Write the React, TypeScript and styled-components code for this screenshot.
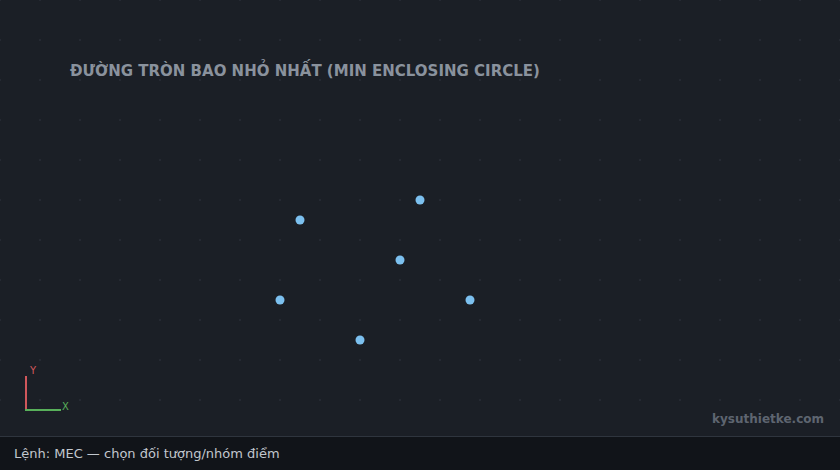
import React from 'react';
import styled, { createGlobalStyle } from 'styled-components';

const GlobalStyle = createGlobalStyle`
  html, body {
    margin: 0;
    padding: 0;
    background: #1b1f26;
  }
  * {
    box-sizing: border-box;
  }
`;

const Screen = styled.div`
  width: 840px;
  height: 470px;
  display: flex;
  flex-direction: column;
  font-family: 'DejaVu Sans', 'Noto Sans', sans-serif;
  overflow: hidden;
`;

const Canvas = styled.div`
  position: relative;
  flex: 1;
  display: flex;
  flex-direction: column;
  justify-content: space-between;
  padding: 62px 16px 10px 70px;
  background: #1b1f26;
`;

const Drawing = styled.svg`
  position: absolute;
  inset: 0;
  width: 100%;
  height: 100%;
`;

const Title = styled.h1`
  position: relative;
  margin: 0;
  font-size: 15px;
  font-weight: 700;
  color: #8a929d;
`;

const Watermark = styled.div`
  position: relative;
  align-self: flex-end;
  font-size: 12px;
  font-weight: 700;
  color: #5e6570;
`;

const CommandBar = styled.div`
  height: 34px;
  display: flex;
  align-items: center;
  padding: 0 14px;
  background: #111419;
  border-top: 1px solid #2f353e;
  font-size: 13px;
  color: #c2c7ce;
`;

type Pt = { x: number; y: number };

// sample point set on the drawing plane
const points: Pt[] = [
  { x: 300, y: 220 },
  { x: 420, y: 200 },
  { x: 400, y: 260 },
  { x: 280, y: 300 },
  { x: 470, y: 300 },
  { x: 360, y: 340 },
];

const Axes: React.FC = () => (
  <g>
    <line x1={26} y1={376} x2={26} y2={410.5} stroke="#d0575b" strokeWidth={2} />
    <line x1={25} y1={410} x2={61} y2={410} stroke="#58b05a" strokeWidth={2} />
    <text x={30} y={374} fontSize={10} fill="#d0575b" fontFamily="DejaVu Sans">
      Y
    </text>
    <text x={62} y={410} fontSize={10} fill="#58b05a" fontFamily="DejaVu Sans">
      X
    </text>
  </g>
);

export default function App() {
  return (
    <>
      <GlobalStyle />
      <Screen>
        <Canvas>
          <Drawing viewBox="0 0 840 436">
            <defs>
              <pattern id="grid" width={40} height={40} patternUnits="userSpaceOnUse">
                <circle cx={0} cy={0} r={1} fill="#272c35" />
                <circle cx={40} cy={0} r={1} fill="#272c35" />
                <circle cx={0} cy={40} r={1} fill="#272c35" />
                <circle cx={40} cy={40} r={1} fill="#272c35" />
              </pattern>
            </defs>
            <rect width={840} height={436} fill="url(#grid)" />
            {points.map((p, i) => (
              <circle key={i} cx={p.x} cy={p.y} r={4.5} fill="#7cc0ef" />
            ))}
            <Axes />
          </Drawing>
          <Title>ĐƯỜNG TRÒN BAO NHỎ NHẤT (MIN ENCLOSING CIRCLE)</Title>
          <Watermark>kysuthietke.com</Watermark>
        </Canvas>
        <CommandBar>Lệnh: MEC — chọn đối tượng/nhóm điểm</CommandBar>
      </Screen>
    </>
  );
}
